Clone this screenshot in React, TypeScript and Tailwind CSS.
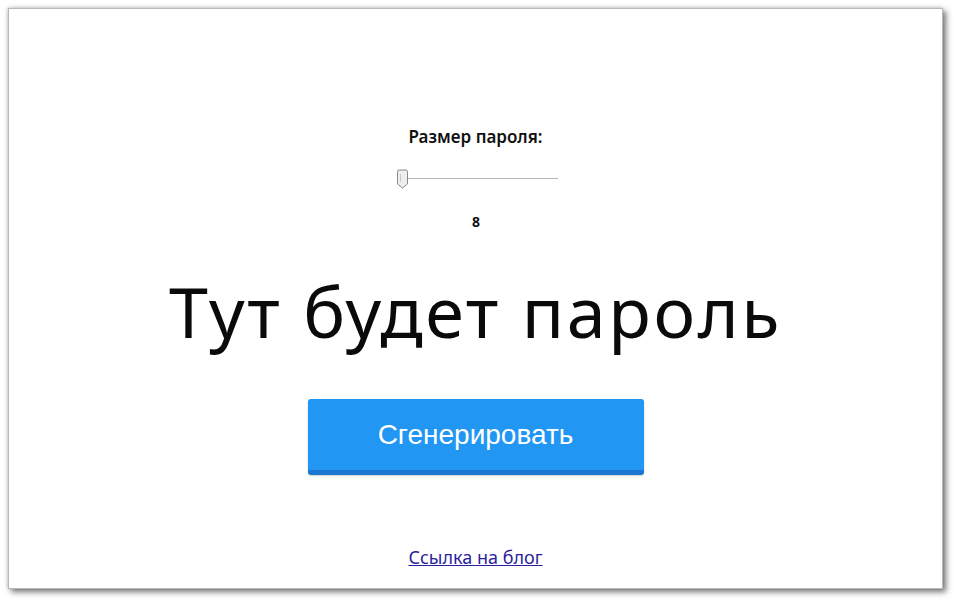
export default function App() {
  return (
    <div className="w-[954px] h-[600px] bg-white p-[8px] pr-[11px] pb-[11px]">
      <div className="h-full w-full bg-white border border-[#b8b8b8] shadow-[3px_3px_6px_rgba(0,0,0,0.55),-1px_-1px_3px_rgba(0,0,0,0.15)] flex flex-col items-center" style={{ fontFamily: '"Noto Sans", "DejaVu Sans", sans-serif' }}>
        <div className="mt-[116px] text-[17px] font-semibold text-[#111] leading-[24px]">Размер пароля:</div>
        <div className="mt-[20px] relative w-[162px] h-[20px] ml-[2px]">
          <div className="absolute left-[10px] right-0 top-[9px] h-[1px] bg-[#b5b5b5]"></div>
          <svg className="absolute left-0 top-0" width="13" height="20" viewBox="0 0 13 20">
            <path d="M1.5 2.5 Q1.5 1 3 1 H10 Q11.5 1 11.5 2.5 V15 L6.5 19 L1.5 15 Z" fill="#eeeeee" stroke="#8a8a8a" strokeWidth="1" />
            <path d="M4.5 5 V13" stroke="#c8c8c8" strokeWidth="1" />
          </svg>
        </div>
        <div className="mt-[23px] text-[14px] font-bold text-[#111] leading-[20px] ml-[1px]">8</div>
        <div className="mt-[39px] text-[70px] text-[#0a0a0a] leading-[80px] tracking-[2.6px]">Тут будет пароль</div>
        <button className="mt-[48px] w-[336px] h-[76px] rounded-[3px] bg-[#2196f3] border-b-[5px] border-[#1976d2] text-white text-[28px] shadow-[0_1px_2px_rgba(0,0,0,0.2)]" style={{ fontFamily: '"Liberation Sans", Arial, sans-serif' }}>Сгенерировать</button>
        <a href="#" className="mt-[70px] text-[18px] text-[#2a1f9c] underline leading-[24px]">Ссылка на блог</a>
      </div>
    </div>
  );
}
